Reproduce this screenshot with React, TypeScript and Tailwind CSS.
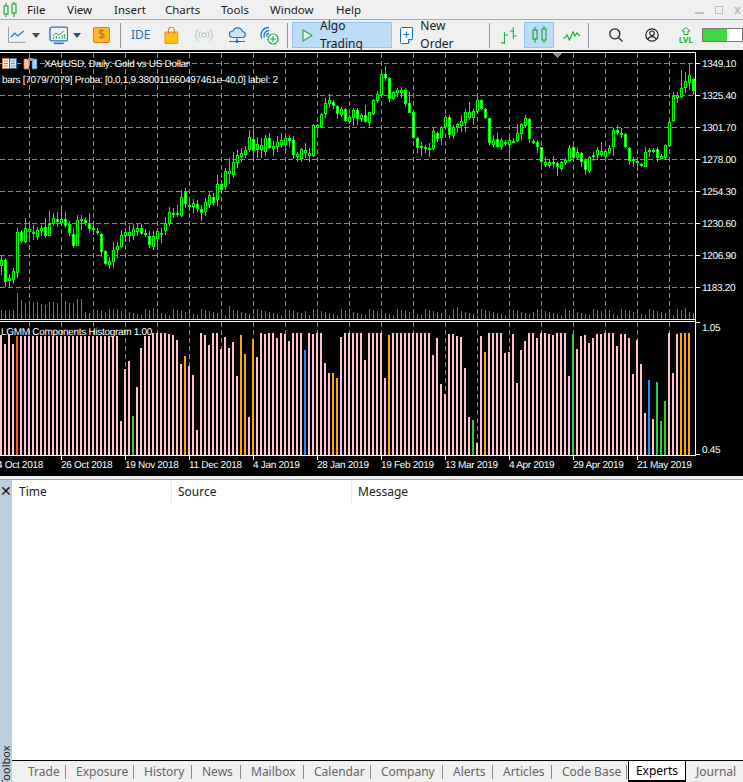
import type { ReactNode } from 'react';

/* ------------------------------------------------------------------ */
/*  Chart data, read off the screenshot (pixel rows)                   */
/* ------------------------------------------------------------------ */
type Candle = [number, number, number, number?, number?];

const z10 = (z: number) => 50 + z / 3;

// top, bottom, filled, high?, low?
const candlesA: Candle[] = [
  [260, 266, 0, 255, 275], [260, 282, 1, 258, 287], [278, 281, 0, 274, 287], [271, 280, 0, 268, 284], [232, 273, 0, 228, 278],
  [232, 241, 1, 230, 243], [228, 242, 0, 218, 243], [229, 232, 0, 222, 242], [232, 234, 1, 225, 240], [230, 237, 0, 227, 240],
  [228, 231, 0, 225, 236], [227, 236, 1, 218, 238], [224, 236, 0, 211, 236], [218, 224, 0, 213, 226], [219, 222, 1, 212, 227],
  [219, 223, 0, 206, 226], [219, 226, 1, 212, 228], [224, 233, 1, 221, 236], [234, 246, 1, 228, 248], [220, 246, 0, 215, 246],
  [219, 221, 0, 215, 230], [220, 223, 1, 218, 226], [223, 229, 1, 213, 233], [228, 230, 0, 223, 235], [231, 233, 1, 228, 235],
  [234, 252, 1, 233, 257], [251, 264, 1, 250, 265], [261, 265, 0, 257, 269], [250, 262, 0, 242, 268], [246, 250, 0, 242, 258],
  [235, 247, 0, 230, 248], [232, 236, 0, 228, 242], [232, 236, 0, 225, 242], [229, 236, 0, 224, 240], [228, 232, 0, 224, 236],
  [228, 234, 1, 224, 235], [233, 235, 1, 229, 237], [236, 245, 1, 231, 248], [236, 247, 0, 231, 250], [231, 239, 0, 228, 245],
  [233, 235, 0, 228, 243], [223, 231, 0, 217, 235], [212, 224, 0, 207, 226], [213, 215, 0, 208, 218], [213, 215, 0, 205, 217],
  [197, 216, 0, 190, 217], [192, 204, 1, 188, 208], [205, 207, 1, 200, 211], [203, 207, 0, 199, 213], [204, 209, 1, 200, 212],
  [209, 213, 1, 205, 221], [202, 212, 0, 198, 216], [195, 205, 0, 192, 208], [197, 203, 1, 193, 206], [184, 200, 0, 175, 206],
  [184, 190, 1, 180, 194], [171, 187, 0, 168, 190], [171, 174, 0, 158, 184], [162, 175, 0, 152, 178], [155, 163, 0, 150, 168],
  [153, 157, 0, 148, 162], [150, 155, 0, 146, 158], [137, 150, 0, 130, 152],
];

const candlesB: Candle[] = ([
  [267, 302, 1, 240, 335], [283, 300, 0], [286, 300, 0, 265, 325], [265, 305, 0], [265, 295, 1, 250, 298], [288, 296, 0], [275, 290, 0], [270, 285, 0],
  [265, 285, 0, 255, 300], [265, 272, 1], [270, 315, 1], [312, 320, 0, 305, 335], [298, 328, 0, 295, 335], [300, 310, 0], [310, 318, 0, 295, 335], [226, 317, 0, 222, 320],
  [226, 233, 0, 222, 250], [192, 230, 0, 188, 232], [160, 192, 0, 145, 205], [150, 162, 0, 133, 175], [155, 167, 1, 150, 178], [167, 192, 1, 165, 207], [178, 195, 0, 170, 200], [178, 213, 1, 175, 216],
  [200, 215, 0, 195, 222], [180, 205, 0, 175, 228], [180, 207, 1, 175, 225], [195, 207, 0, 190, 215], [195, 216, 1, 165, 218], [187, 218, 0, 185, 233], [150, 192, 0, 148, 195], [133, 152, 0, 123, 160],
  [72, 135, 0, 68, 137], [72, 85, 1, 48, 92], [85, 147, 1, 80, 155], [125, 147, 0, 122, 150], [120, 130, 0, 115, 140], [120, 130, 0, 112, 145], [120, 162, 1, 115, 170], [160, 188, 1, 125, 190],
  [187, 265, 1, 184, 268], [265, 293, 1, 262, 310], [288, 295, 0, 275, 318], [292, 298, 0, 285, 308], [293, 298, 0, 280, 320], [243, 298, 0, 235, 300], [250, 268, 1, 245, 275], [232, 265, 0, 228, 285],
  [202, 232, 0, 195, 235], [202, 255, 1, 195, 268], [230, 258, 0, 225, 268], [222, 232, 0, 218, 250], [213, 228, 0, 195, 245], [187, 218, 0, 178, 245], [187, 205, 0, 155, 210], [183, 205, 0, 178, 225],
  [150, 185, 0, 138, 188], [150, 177, 1, 148, 180], [178, 205, 1, 175, 208], [205, 278, 1, 203, 285], [270, 285, 0, 255, 290], [268, 290, 1, 248, 295],
] as Candle[]).map(([t, b, f, h, l]) => [z10(t), z10(b), f, h === undefined ? undefined : z10(h), l === undefined ? undefined : z10(l)]);

const candlesC: Candle[] = ([
  [270, 292, 0, 265, 300], [275, 282, 0, 270, 288], [270, 285, 0, 262, 320], [272, 275, 0, 265, 278], [250, 273, 0, 222, 275], [222, 252, 0, 218, 270], [205, 228, 0, 195, 235],
  [208, 268, 1, 205, 280], [273, 278, 0, 268, 282], [276, 290, 1, 270, 310], [292, 335, 1, 290, 355], [335, 344, 0, 322, 350], [337, 347, 0, 328, 355], [337, 342, 0, 318, 358], [340, 352, 1, 335, 378],
  [337, 356, 0, 332, 362], [330, 340, 0, 325, 345], [295, 332, 0, 285, 335], [292, 323, 1, 288, 330], [307, 323, 0, 295, 328], [310, 335, 1, 305, 350], [330, 360, 1, 325, 375], [322, 362, 0, 318, 368],
  [315, 320, 0, 305, 332], [300, 316, 0, 292, 330], [304, 316, 0, 275, 322], [303, 320, 0, 298, 325], [295, 308, 0, 285, 312], [240, 290, 0, 235, 318], [240, 250, 1, 225, 255], [250, 256, 0, 235, 265],
  [253, 292, 1, 250, 295], [295, 332, 1, 290, 345], [327, 332, 0, 322, 350], [334, 340, 0, 328, 362], [343, 348, 0, 338, 350], [306, 350, 0, 290, 352], [300, 306, 0, 295, 320], [300, 304, 0, 295, 310],
  [297, 323, 1, 290, 335], [318, 326, 0, 312, 328], [286, 324, 0, 283, 328], [216, 287, 0, 210, 290], [138, 212, 0, 125, 215], [136, 143, 0, 125, 160], [114, 142, 0, 60, 145], [93, 114, 0, 65, 130],
  [75, 98, 0, 40, 120], [88, 123, 1, 85, 135],
] as Candle[]).map(([t, b, f, h, l]) => [z10(t), z10(b), f, h === undefined ? undefined : z10(h), l === undefined ? undefined : z10(l)]);

const candles = [...candlesA, ...candlesB, ...candlesC];

const volumesLeft = [330, 332, 332, 330, 280, 300, 308, 312, 310, 305, 312, 315, 307, 307, 308, 292, 303, 310, 310, 298, 297, 335, 340, 328, 330, 332, 335, 328, 328, 327, 333];
const volumeAt = (i: number) => {
  if (i < volumesLeft.length) return (357 - volumesLeft[i]) / 3;
  return 4 + ((i * 37 + (i % 7) * 11) % 7) + (i % 19 === 0 ? 3 : 0);
};

// histogram: top row of each bar; colour p=pink o=orange b=blue g=green r=red-orange
const histTops = [
  335, 344, 335, 344, 336, ...Array(25).fill(336), 421, 369, 361, 416, 387, 348, 336, 336, 333, 333, 333, 333, 334, 335, 340,
  364, 356, 366, 375, 430, 333, 335, 345, 333, 333, 349, 337, 348, 342, 376, 335, 354, 417,
  339, 357, 333, 334, 333, 333, 338, 333, 334, 341, 333, 333, 333, 350, 333, 334, 333, 333, 363, 373, 373, 378, 337, 333, 333, 333, 333, 333, 360, 333, 333, 333, 333, 378, 335,
  333, 333, 333, 333, 333, 333, 333, 333, 333, 333, 355, 338, 384, 394, 334, 334, 336, 337, 368, 417, 420, 443, 336, 352, 333, 333,
  333, 333, 353, 352, 334, 383, 350, 341, 333, 333, 338, 333, 333, 334, 335, 333, 333, 333, 376, 334, 349, 336, 335, 343, 338, 334, 334, 333, 333, 333, 346, 334, 334, 338, 374, 340, 364, 413, 380, 419, 382, 421, 401, 333, 373, 334, 333, 333, 333,
];
const histColors: Record<number, string> = {
  4: '#ff5f00', 33: '#32cd32', 46: '#ffa500', 60: '#ffa500', 61: '#ffa500', 63: '#ffa500', 76: '#1e90ff', 83: '#ffa500', 84: '#ffa500',
  97: '#ffa500', 118: '#32cd32', 121: '#ffa500', 143: '#32cd32', 162: '#1e90ff', 164: '#32cd32', 165: '#32cd32', 166: '#32cd32', 170: '#ffa500', 171: '#ffa500', 172: '#ffa500', 173: '#ffa500',
};

const gridX = Array.from({ length: 21 }, (_, i) => 29 + i * 32);
const gridY = [63, 95, 127, 159, 191, 223, 255, 287];
const prices = ['1349.10', '1325.40', '1301.70', '1278.00', '1254.30', '1230.60', '1206.90', '1183.20'];
const dates: [number, string][] = [
  [-3, '4 Oct 2018'], [61, '26 Oct 2018'], [125, '19 Nov 2018'], [189, '11 Dec 2018'], [253, '4 Jan 2019'], [317, '28 Jan 2019'],
  [381, '19 Feb 2019'], [445, '13 Mar 2019'], [509, '4 Apr 2019'], [573, '29 Apr 2019'], [637, '21 May 2019'],
];

/* ------------------------------------------------------------------ */
/*  Chart                                                              */
/* ------------------------------------------------------------------ */
function ChartText({ x, y, children }: { x: number; y: number; children: ReactNode }) {
  return (
    <text x={x} y={y} fill="#fff" fontSize="10" letterSpacing="-0.3" fontFamily="'Liberation Sans', sans-serif" textRendering="geometricPrecision">
      {children}
    </text>
  );
}

function Chart() {
  return (
    <svg width="743" height="426" viewBox="0 50 743 426" className="block" shapeRendering="crispEdges">
      <rect x="0" y="50" width="743" height="426" fill="#000" />
      {/* grid */}
      {gridX.map((x) => (
        <g key={x} stroke="#838c96" strokeDasharray="5 3">
          <line x1={x + 0.5} y1="53" x2={x + 0.5} y2="319" />
          <line x1={x + 0.5} y1="322" x2={x + 0.5} y2="455" />
        </g>
      ))}
      {gridY.map((y) => (
        <line key={y} x1="0" y1={y + 0.5} x2="695" y2={y + 0.5} stroke="#838c96" strokeDasharray="5 3" />
      ))}
      {/* volumes */}
      {candles.map((_, i) => (
        <rect key={i} x={1 + 4 * i} y={319 - volumeAt(i)} width="1" height={volumeAt(i)} fill="#3c9c3c" />
      ))}
      {/* candles */}
      {candles.map(([top, bottom, filled, high, low], i) => {
        const x = 1 + 4 * i;
        const t = Math.round(top);
        const b = Math.round(bottom);
        const hi = Math.round(high ?? top - 3 - (i * 7) % 6);
        const lo = Math.round(low ?? bottom + 3 + (i * 5) % 7);
        return (
          <g key={i}>
            <rect x={x} y={hi} width="1" height={lo - hi} fill="#00ff00" />
            <rect x={x - 1} y={t} width="3" height={Math.max(b - t, 2)} fill="#00ff00" />
            {b - t > 2 && <rect x={x} y={t + 1} width="1" height={b - t - 2} fill={filled ? '#fff' : '#000'} />}
          </g>
        );
      })}
      {/* histogram */}
      {histTops.slice(0, 174).map((top, i) => (
        <rect key={i} x={4 * i} y={top} width="2" height={455 - top} fill={histColors[i] ?? '#ffc0cb'} />
      ))}
      {/* frame */}
      <rect x="0" y="52" width="696" height="1" fill="#fff" />
      <rect x="0" y="319" width="696" height="1" fill="#fff" />
      <rect x="0" y="321" width="696" height="1" fill="#fff" />
      <rect x="0" y="455" width="696" height="1" fill="#fff" />
      <rect x="695" y="52" width="1" height="404" fill="#fff" />
      <polygon points="552,53 562,53 557,58" fill="#838c96" />
      {/* price axis */}
      {gridY.map((y, i) => (
        <g key={y}>
          <rect x="696" y={y} width="4" height="1" fill="#fff" />
          <ChartText x={702} y={y + 4}>{prices[i]}</ChartText>
        </g>
      ))}
      <rect x="696" y="322" width="4" height="1" fill="#fff" />
      <ChartText x={702} y={331}>1.05</ChartText>
      <rect x="696" y="454" width="4" height="1" fill="#fff" />
      <ChartText x={702} y={453}>0.45</ChartText>
      {/* time axis */}
      {dates.map(([x, label]) => (
        <g key={label}>
          <rect x={x} y="456" width="1" height="4" fill="#fff" />
          <ChartText x={x} y={468}>{label}</ChartText>
        </g>
      ))}
      {/* labels */}
      <g shapeRendering="auto">
        <rect x="2.5" y="58.5" width="14" height="10" fill="#fff" stroke="#e8792c" />
        <rect x="9.5" y="58.5" width="7" height="10" fill="#cfe6f7" stroke="#1e6fb0" />
        <path d="M4 61h4M4 63.5h4M4 66h4M11 61h4M11 63.5h4M11 66h4" stroke="#e8792c" />
        <path d="M24 59h3l2 2v8h-5z" fill="#f7c1ae" stroke="#e8792c" strokeWidth="0.7" />
        <path d="M32 59h5v10h-5z" fill="#a6d4f2" stroke="#1e6fb0" strokeWidth="0.7" />
        <rect x="28" y="58" width="5" height="3" fill="#9a9a9a" />
      </g>
      <ChartText x={44} y={67}>XAUUSD, Daily:  Gold vs US Dollar</ChartText>
      <ChartText x={2} y={83}>bars [7079/7079] Proba: [0,0,1,9.380011660497461e-40,0] label: 2</ChartText>
      <ChartText x={1} y={335}>LGMM Components Histogram 1.00</ChartText>
    </svg>
  );
}

/* ------------------------------------------------------------------ */
/*  Toolbar icons                                                      */
/* ------------------------------------------------------------------ */
const Arrow = () => (
  <svg width="8" height="5" viewBox="0 0 8 5"><path d="M0 0h8L4 5z" fill="#3c4a6b" /></svg>
);
const Sep = () => <div className="h-[25px] w-px bg-[#9a9a9a]" />;

const CandleLogo = () => (
  <svg width="14" height="16" viewBox="0 0 14 16" fill="none" stroke="#1fae35" strokeWidth="1.2">
    <rect x="1" y="4" width="4" height="8" /><path d="M3 1v3M3 12v3" />
    <rect x="9" y="2" width="4" height="9" /><path d="M11 0v2M11 11v4" />
  </svg>
);
const LineChartIcon = () => (
  <svg width="18" height="16" viewBox="0 0 18 16" fill="none">
    <path d="M.5 0v15.5H18" stroke="#9a9a9a" />
    <path d="M3 10l4-4 3 3 6-5" stroke="#1e78c8" strokeWidth="1.2" />
  </svg>
);
const MonitorIcon = () => (
  <svg width="20" height="19" viewBox="0 0 20 19" fill="none">
    <rect x="1" y="1" width="18" height="14" rx="2" stroke="#1e78c8" strokeWidth="1.4" />
    <path d="M4 10l3-3 3 2 5-4" stroke="#2ba84a" />
    <path d="M4.5 13v-2M7.5 13v-3M10.5 13v-2M13.5 13V9M16 13V8" stroke="#2ba84a" />
    <path d="M5 17.5h10" stroke="#1e78c8" strokeWidth="1.6" />
  </svg>
);
const DollarIcon = () => (
  <div className="flex h-[16px] w-[17px] items-center justify-center rounded-[2px] border border-[#e07a1f] bg-[#fbb829] text-[12px] leading-none text-[#c8641a]">$</div>
);
const BagIcon = () => (
  <svg width="15" height="17" viewBox="0 0 15 17">
    <path d="M1 5h13v11.5H1z" fill="#fcc00e" stroke="#e8901c" />
    <path d="M4.5 7V3a3 3 0 0 1 6 0v4" fill="none" stroke="#c9772a" />
  </svg>
);
const SignalIcon = () => (
  <svg width="18" height="14" viewBox="0 0 18 14" fill="none" stroke="#b9cfc5" strokeWidth="1.2">
    <circle cx="9" cy="7" r="2.2" />
    <path d="M5.5 3.5a5 5 0 0 0 0 7M12.5 3.5a5 5 0 0 1 0 7M3 1a9 9 0 0 0 0 12M15 1a9 9 0 0 1 0 12" />
  </svg>
);
const CloudIcon = () => (
  <svg width="18" height="17" viewBox="0 0 18 17" fill="none" stroke="#1e78c8" strokeWidth="1.2">
    <path d="M4 10.5h10a3 3 0 0 0 .5-6 5 5 0 0 0-9.5-.5A3.3 3.3 0 0 0 4 10.5z" fill="#cfe6f7" />
    <path d="M9 11v3M1 14.5h16" /><circle cx="9" cy="14.5" r="1" fill="#1e78c8" />
  </svg>
);
const VpsIcon = () => (
  <svg width="19" height="19" viewBox="0 0 19 19" fill="none">
    <path d="M9 1.5a7.5 7.5 0 0 0-7 11M9 4.5a5 5 0 0 0-4.5 7M9 7.5a2 2 0 0 0-2 3" stroke="#1e78c8" strokeWidth="1.3" />
    <circle cx="13" cy="13" r="5" fill="#fff" stroke="#22a846" strokeWidth="1.2" />
    <path d="M13 10v6M10 13h6" stroke="#22a846" strokeWidth="1.2" />
  </svg>
);
const PlayIcon = () => (
  <svg width="11" height="13" viewBox="0 0 11 13"><path d="M1 1l9 5.5L1 12z" fill="#e9f6ee" stroke="#22a846" strokeWidth="1.1" /></svg>
);
const OrderIcon = () => (
  <svg width="14" height="17" viewBox="0 0 14 17" fill="none">
    <path d="M1.5.5h11v11l-4 5h-7a1 1 0 0 1-1-1v-14z" fill="#fff" stroke="#1e6fb0" />
    <path d="M8.5 16.5v-4h4" fill="#bcd9f0" stroke="#1e6fb0" />
    <path d="M6.5 4.5v6M3.5 7.5h6" stroke="#1e6fb0" strokeWidth="1.1" />
  </svg>
);
const BarsIcon = () => (
  <svg width="17" height="17" viewBox="0 0 17 17" fill="none" stroke="#1fae35" strokeWidth="1.1">
    <path d="M3.5 5v12M0 16h3.5M3.5 8H7M12.5 0v12M9 4h3.5M12.5 9H16" />
  </svg>
);
const CandlesIcon = () => (
  <svg width="15" height="18" viewBox="0 0 15 18" fill="none" stroke="#1fae35" strokeWidth="1.2">
    <rect x="1" y="4" width="4" height="9" /><path d="M3 1v3M3 13v4" />
    <rect x="10" y="3" width="4" height="11" /><path d="M12 0v3M12 14v3" />
  </svg>
);
const TickLineIcon = () => (
  <svg width="17" height="11" viewBox="0 0 17 11" fill="none" stroke="#1fae35" strokeWidth="1.2">
    <path d="M0 8h2l2-3 2.5 5L10 2l2 4 2-3 3 3" />
  </svg>
);
const SearchIcon = () => (
  <svg width="14" height="14" viewBox="0 0 14 14" fill="none" stroke="#222" strokeWidth="1.3">
    <circle cx="5.8" cy="5.8" r="5" /><path d="M9.5 9.5l4 4" />
  </svg>
);
const AccountIcon = () => (
  <svg width="14" height="14" viewBox="0 0 14 14" fill="none" stroke="#222" strokeWidth="1.2">
    <circle cx="7" cy="7" r="6.2" /><circle cx="7" cy="5.3" r="2.3" /><path d="M2.8 11.2c1-2 2.4-2.6 4.2-2.6s3.200.6 4.200 2.600" />
  </svg>
);
const LvlIcon = () => (
  <div className="flex w-[14px] flex-col items-center text-[#1fae35]">
    <svg width="10" height="8" viewBox="0 0 10 8" fill="none" stroke="currentColor"><path d="M5 .5L1 4h2v3.500h4V4h2z" /></svg>
    <span className="mt-[1px] text-[8px] font-bold leading-none">LVL</span>
  </div>
);

/* ------------------------------------------------------------------ */
/*  Page                                                               */
/* ------------------------------------------------------------------ */
const menu = [
  ['File', 'w-[40px]'], ['View', 'w-[47px]'], ['Insert', 'w-[51px]'], ['Charts', 'w-[56px]'],
  ['Tools', 'w-[49px]'], ['Window', 'w-[66px]'], ['Help', 'w-[40px]'],
];

const tabs = [
  ['Trade', 'w-[54px]'], ['Exposure', 'w-[68px]'], ['History', 'w-[58px]'], ['News', 'w-[49px]'], ['Mailbox', 'w-[63px]'], ['Calendar', 'w-[67px]'],
  ['Company', 'w-[72px]'], ['Alerts', 'w-[50px]'], ['Articles', 'w-[59px]'], ['Code Base', 'w-[75px]'],
];

export default function App() {
  return (
    <div className="relative flex h-[782px] w-[743px] flex-col overflow-hidden bg-[#f0f0f0] font-['Noto_Sans',sans-serif] text-[11.5px] text-[#1a1a1a]">
      {/* menu */}
      <div className="flex h-[20px] shrink-0 items-center border-b border-[#a8a8a8] pl-[3px]">
        <div className="w-[24px]"><CandleLogo /></div>
        {menu.map(([name, w]) => <div key={name} className={w}>{name}</div>)}
        <div className="ml-auto flex items-center gap-[11px] pr-[2px] text-[#b5c4bb]">
          <div className="mt-[6px] h-[2px] w-[9px] bg-[#b5c4bb]" />
          <div className="h-[8px] w-[8px] border border-[#b5c4bb]" />
          <div className="text-[12px] font-bold leading-none">x</div>
        </div>
      </div>

      {/* toolbar */}
      <div className="flex h-[30px] shrink-0 items-center pl-[8px]">
        <LineChartIcon />
        <div className="ml-[6px] mr-[9px]"><Arrow /></div>
        <MonitorIcon />
        <div className="ml-[5px] mr-[12px]"><Arrow /></div>
        <DollarIcon />
        <div className="ml-[10px] mr-[10px]"><Sep /></div>
        <div className="w-[34px] text-[12px] text-[#1e6fb0]">IDE</div>
        <BagIcon />
        <div className="ml-[16px]"><SignalIcon /></div>
        <div className="ml-[15px]"><CloudIcon /></div>
        <div className="ml-[14px]"><VpsIcon /></div>
        <div className="ml-[8px] mr-[4px]"><Sep /></div>
        <div className="flex h-[26px] w-[102px] items-center gap-[7px] border border-[#92c6ef] bg-[#bcdcf5] pl-[9px]">
          <PlayIcon />
          <span className="text-[12px]">Algo Trading</span>
        </div>
        <div className="ml-[8px]"><OrderIcon /></div>
        <span className="ml-[6px] text-[12px]">New Order</span>
        <div className="ml-[8px] mr-[11px]"><Sep /></div>
        <BarsIcon />
        <div className="ml-[7px] flex h-[26px] w-[30px] items-center justify-center border border-[#92c6ef] bg-[#bcdcf5]"><CandlesIcon /></div>
        <div className="ml-[9px] mr-[8px]"><TickLineIcon /></div>
        <Sep />
        <div className="ml-[20px]"><SearchIcon /></div>
        <div className="ml-[22px]"><AccountIcon /></div>
        <div className="ml-[20px]"><LvlIcon /></div>
        <div className="ml-[9px] h-[14px] w-[42px] border border-[#777] bg-white">
          <div className="h-full w-[24px] bg-[#3fd93f]" />
        </div>
      </div>

      <Chart />

      {/* toolbox panel */}
      <div className="h-[4px] shrink-0 border-b border-[#a8a8a8]" />
      <div className="flex min-h-0 flex-1">
        <div className="relative w-[12px] shrink-0 bg-[#bccfdf]">
          <div className="absolute left-0 top-0 h-[24px] w-[12px] text-center text-[14px] leading-[22px] text-[#111]">✕</div>
          <div className="absolute bottom-[-4px] left-[-1px] origin-bottom-left translate-x-[13px] -rotate-90 whitespace-nowrap text-[11px] leading-[13px] text-[#222]">Toolbox</div>
        </div>
        <div className="flex min-w-0 flex-1 flex-col bg-white">
          <div className="flex h-[24px] shrink-0 items-center text-[12px] text-[#222]">
            <div className="h-full w-[160px] border-r border-[#e8e8e8] pl-[7px] leading-[23px]">Time</div>
            <div className="h-full w-[180px] border-r border-[#e8e8e8] pl-[6px] leading-[23px]">Source</div>
            <div className="h-full pl-[6px] leading-[23px]">Message</div>
          </div>
          <div className="flex-1" />
          {/* tabs */}
          <div className="flex h-[22px] shrink-0 border-t border-black bg-[#f0f0f0] text-[12px] text-[#666]">
            {tabs.map(([name, w], i) => (
              <div key={name} className={`${w} flex h-full items-center`}>
                <span className={i === 0 ? 'flex-1 pl-[16px]' : 'flex-1 pl-[10px]'}>{name}</span>
                <div className="h-[14px] w-px bg-[#8a8a8a]" />
              </div>
            ))}
            <div className="ml-[1px] flex h-[21px] w-[58px] items-center justify-center border-x border-b-2 border-x-black border-b-black bg-white text-black">Experts</div>
            <div className="pl-[10px] leading-[21px]">Journal</div>
          </div>
        </div>
      </div>
    </div>
  );
}
